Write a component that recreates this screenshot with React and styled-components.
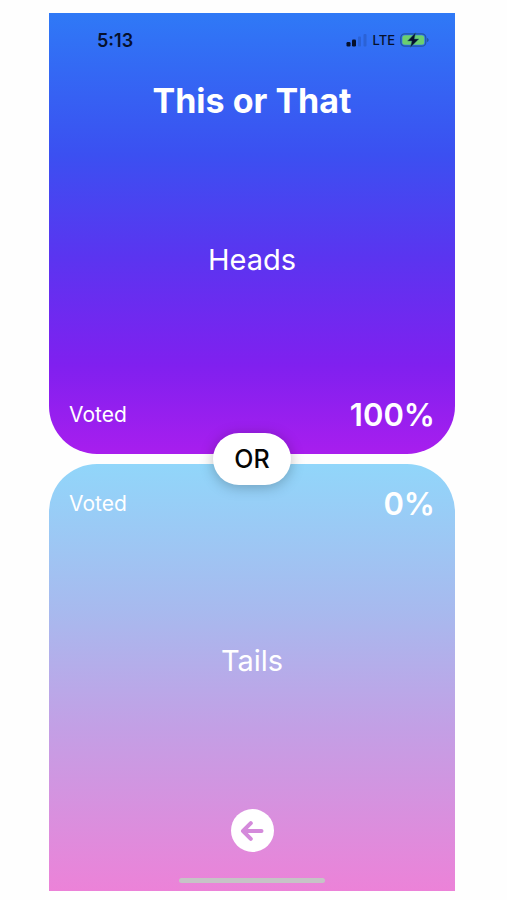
import React from 'react';
import styled, { createGlobalStyle } from 'styled-components';

function App() {
    return (
        <>
            <GlobalStyle />
            <Screen>
                <HeadsPanel>
                    <StatusBar>
                        <time>5:13</time>
                        <StatusIcons>
                            <SignalIcon />
                            <span>LTE</span>
                            <BatteryIcon />
                        </StatusIcons>
                    </StatusBar>
                    <Title>This or That</Title>
                    <Choice>Heads</Choice>
                    <Result>
                        <span>Voted</span>
                        <strong>100%</strong>
                    </Result>
                </HeadsPanel>
                <Divider>
                    <OrBadge>OR</OrBadge>
                </Divider>
                <TailsPanel>
                    <Result>
                        <span>Voted</span>
                        <strong>0%</strong>
                    </Result>
                    <Choice>Tails</Choice>
                    <BackButton type="button" aria-label="Back">
                        <ArrowIcon />
                    </BackButton>
                    <HomeIndicator />
                </TailsPanel>
            </Screen>
        </>
    );
}

function SignalIcon() {
    return (
        <svg width="22" height="14" viewBox="0 0 22 14" aria-hidden="true">
            <rect x="0.5" y="9" width="4" height="4.5" rx="1.2" fill="#06102c" />
            <rect x="6" y="6.5" width="4" height="7" rx="1.2" fill="#06102c" />
            <rect x="12" y="3.5" width="3" height="10" rx="1" fill="#2b62d6" />
            <rect x="17.5" y="1" width="3" height="12.5" rx="1" fill="#2b62d6" />
        </svg>
    );
}

function BatteryIcon() {
    return (
        <svg width="29" height="16" viewBox="0 0 29 16" aria-hidden="true">
            <rect x="0.8" y="1.8" width="25" height="12.4" rx="4" fill="none" stroke="#2356a4" strokeWidth="1.3" />
            <path d="M27 6v4c1-.3 1.7-1.1 1.7-2s-.7-1.7-1.7-2Z" fill="#2356a4" />
            <rect x="2.3" y="3.3" width="22" height="9.4" rx="2.5" fill="#6bcf70" />
            <path d="M15.5 .8 7.6 9h4.3l-1.5 6.3L18.8 7h-4.5Z" fill="#06102c" stroke="#2c6a86" strokeWidth="0.5" />
        </svg>
    );
}

function ArrowIcon() {
    return (
        <svg width="24" height="20" viewBox="0 0 24 20" aria-hidden="true">
            <path d="M10.8 2.2 3 10l7.8 7.8M4 10h17.5" fill="none" stroke="#d48adb" strokeWidth="4" strokeLinecap="round" strokeLinejoin="round" />
        </svg>
    );
}

const GlobalStyle = createGlobalStyle`
    * {
        box-sizing: border-box;
    }

    body {
        margin: 0;
        background: #fefefe;
        font-family: Inter, "Liberation Sans", sans-serif;
    }
`;

const Screen = styled.main`
    display: flex;
    flex-direction: column;
    min-height: 100vh;
    padding: 13px 52px 9px 49px;
`;

const Panel = styled.section`
    display: flex;
    flex-direction: column;
    color: #fff;
`;

const HeadsPanel = styled(Panel)`
    flex: 18 0 0;
    padding-bottom: 20px;
    border-radius: 0 0 48px 48px;
    background: linear-gradient(#2f79f6, #3b50f1 32%, #5a35f0 55%, #8020ef 80%, #a81eee);
`;

const TailsPanel = styled(Panel)`
    flex: 17 0 0;
    align-items: center;
    padding: 21px 0 8px;
    border-radius: 48px 48px 0 0;
    background: linear-gradient(#91d6fa, #a8b9ee 35%, #c39fe5 62%, #ec82d8);
`;

const StatusBar = styled.div`
    display: flex;
    justify-content: space-between;
    align-items: center;
    height: 28px;
    margin-top: 13px;
    padding: 0 26px 0 48px;
    color: #06102c;
    font-size: 18px;
    font-weight: 600;
`;

const StatusIcons = styled.div`
    display: flex;
    align-items: center;
    gap: 5px;
    font-size: 13px;
    font-weight: 500;
`;

const Title = styled.h1`
    margin: 25px 0 0;
    font-size: 34px;
    font-weight: 700;
    line-height: 44px;
    text-align: center;
`;

const Choice = styled.h2`
    display: flex;
    flex: 1;
    align-items: center;
    justify-content: center;
    margin: 0;
    font-size: 29px;
    font-weight: 400;
    line-height: 36px;
`;

const Result = styled.div`
    display: flex;
    justify-content: space-between;
    align-items: center;
    align-self: stretch;
    padding: 0 20px;
    font-size: 21px;
    font-weight: 400;
    line-height: 38px;

    strong {
        font-size: 31px;
        font-weight: 600;
    }
`;

const Divider = styled.div`
    display: flex;
    justify-content: center;
    align-items: center;
    height: 10px;
`;

const OrBadge = styled.span`
    position: relative;
    z-index: 1;
    flex: none;
    padding: 0 21px;
    border-radius: 26px;
    background: #fff;
    color: #050505;
    font-size: 25px;
    font-weight: 500;
    line-height: 52px;
    box-shadow: 0 2px 14px rgba(0, 0, 0, 0.26);
`;

const BackButton = styled.button`
    display: flex;
    align-items: center;
    justify-content: center;
    width: 43px;
    height: 43px;
    margin: 10px 0 26px;
    padding: 0;
    border: 0;
    border-radius: 50%;
    background: #fff;
    cursor: pointer;
`;

const HomeIndicator = styled.div`
    width: 36%;
    height: 5px;
    border-radius: 3px;
    background: #c6c3c6;
`;

export default App;
